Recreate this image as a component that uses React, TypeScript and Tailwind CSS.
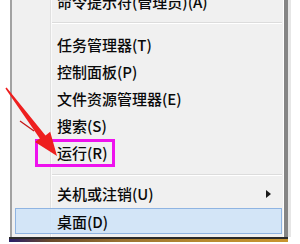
/**
 * Windows 8 Win+X menu, cropped, with tutorial annotations
 */

const TOP_ITEMS = ['任务管理器(T)', '控制面板(P)', '文件资源管理器(E)', '搜索(S)', '运行(R)']

function Separator({ className }: { className: string }) {
  return (
    <div className={className}>
      <div className="ml-[40px] mr-[1px] h-px bg-[#dcdcdc]" />
      <div className="ml-[40px] mr-[1px] h-px bg-white" />
    </div>
  )
}

function Item({ label }: { label: string }) {
  return <div className="h-[27px] flex items-center pl-[45px]">{label}</div>
}

export default function App() {
  return (
    <div
      className="relative w-[300px] h-[244px] bg-white overflow-hidden text-[15px] leading-none font-medium text-[#0a0a0a]"
      style={{ fontFamily: '"Noto Sans CJK SC", "Noto Sans", sans-serif' }}
    >
      <div className="flex h-[237px]">
        <div className="w-[10px] bg-white" />
        <div className="w-[278px] h-full border-l-2 border-r-[4px] border-l-[#a2a2a2] border-r-[#858585]">
          <div className="h-full overflow-hidden border-r border-white bg-[linear-gradient(to_right,#f0f0f0_38px,#e0e0e0_38px,#e0e0e0_39px,#fafafa_39px,#fafafa_40px,#f0f0f0_40px)]">
            <div className="mt-[-12px]">
              <Item label="命令提示符(管理员)(A)" />
            </div>
            <Separator className="h-[16px] pt-[7px]" />
            {TOP_ITEMS.map(label => (
              <Item key={label} label={label} />
            ))}
            <Separator className="h-[14px] pt-[8px]" />
            <div className="h-[27px] flex items-center justify-between pl-[45px] pr-[12px]">
              <span>关机或注销(U)</span>
              <svg width="5" height="8" viewBox="0 0 5 8">
                <polygon points="0,0 5,4 0,8" fill="#1a1a1a" />
              </svg>
            </div>
            <div className="h-[26px] ml-[3px] mr-[1px] mt-px flex items-center pl-[41px] border border-[#8fb4e2] bg-[#cfe3f7]/90">
              桌面(D)
            </div>
          </div>
        </div>
        <div className="w-[3px] bg-[#e6e6e6]" />
      </div>
      <div className="flex h-[5px]">
        <div className="w-[9px]" />
        <div className="flex-1 border-t-2 border-[#2b2b2b] bg-[linear-gradient(to_right,#2a1f6a,#6b4a2a_15%,#9b7232_40%,#b88a30_70%,#c99530)]" />
        <div className="w-[12px]" />
      </div>

      {/* annotation: highlight box */}
      <div className="absolute left-[35px] top-[139px] w-[80px] h-[28px] border-[3px] border-[#ee12ee]" />

      {/* annotation: red arrow */}
      <svg className="absolute left-0 top-0" width="300" height="244" viewBox="0 0 300 244">
        <polygon
          points="6.6,87.5 45.5,135.4 50.2,131.8 57,156 35,142 39.8,138.6 5.4,88.5"
          fill="#ee1f1f"
        />
        <line x1="20" y1="121" x2="34" y2="131" stroke="#c41515" strokeWidth="1.3" />
      </svg>
    </div>
  )
}
